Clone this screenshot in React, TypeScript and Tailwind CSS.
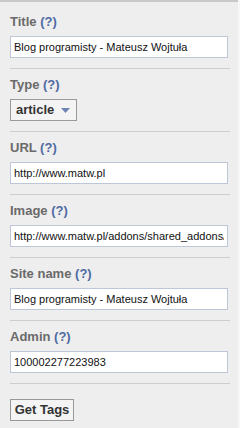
import type { ReactNode } from 'react';

const FONT = { fontFamily: 'Tahoma, "Liberation Sans", "DejaVu Sans", sans-serif' };

interface Field {
  label: string;
  value: string;
}

const TOP_FIELDS: Field[] = [{ label: 'Title', value: 'Blog programisty - Mateusz Wojtuła' }];

const REST_FIELDS: Field[] = [
  { label: 'URL', value: 'http://www.matw.pl' },
  { label: 'Image', value: 'http://www.matw.pl/addons/shared_addons/themes/matw/img/logo.png' },
  { label: 'Site name', value: 'Blog programisty - Mateusz Wojtuła' },
  { label: 'Admin', value: '100002277223983' },
];

function Label({ text }: { text: string }) {
  return (
    <div className="h-4 leading-4 mb-[6px] text-[13px] font-bold text-[#6a6a6a] whitespace-nowrap">
      {text} <span className="text-[#4f6aa3] cursor-help">(?)</span>
    </div>
  );
}

function Section({ label, children }: { label: string; children: ReactNode }) {
  return (
    <div className="ml-[10px] w-[220px] pt-2 pb-[10px] border-b border-[#cdcdcd]">
      <Label text={label} />
      {children}
    </div>
  );
}

function TextField({ value }: { value: string }) {
  return (
    <input
      type="text"
      defaultValue={value}
      style={FONT}
      className="block w-[218px] h-[22px] px-[3px] border border-[#bdc7d8] bg-white text-[11px] text-[#111] outline-none"
    />
  );
}

export default function App() {
  return (
    <div className="w-[240px] h-[428px] bg-[#f7f7f7]" style={FONT}>
      <div className="w-[238px] h-full bg-[#eeeeee] border-t-2 border-[#c9c9c9] pt-1">
        {TOP_FIELDS.map((f) => (
          <Section key={f.label} label={f.label}>
            <TextField value={f.value} />
          </Section>
        ))}

        <Section label="Type">
          <button
            type="button"
            style={FONT}
            className="flex items-center h-[22px] w-[67px] pl-[5px] border border-[#9a9a9a] bg-[#f4f4f4] text-[13px] font-bold text-[#333]"
          >
            article
            <svg width="9" height="5" viewBox="0 0 9 5" className="ml-[7px]">
              <path d="M0 0 H9 L4.5 5 Z" fill="#6d84b4" />
            </svg>
          </button>
        </Section>

        {REST_FIELDS.map((f) => (
          <Section key={f.label} label={f.label}>
            <TextField value={f.value} />
          </Section>
        ))}

        <div className="ml-[10px] pt-[13px]">
          <button
            type="button"
            style={FONT}
            className="h-[22px] w-[64px] border border-[#999] bg-[#f4f4f4] text-[13px] font-bold text-[#333]"
          >
            Get Tags
          </button>
        </div>
      </div>
    </div>
  );
}
